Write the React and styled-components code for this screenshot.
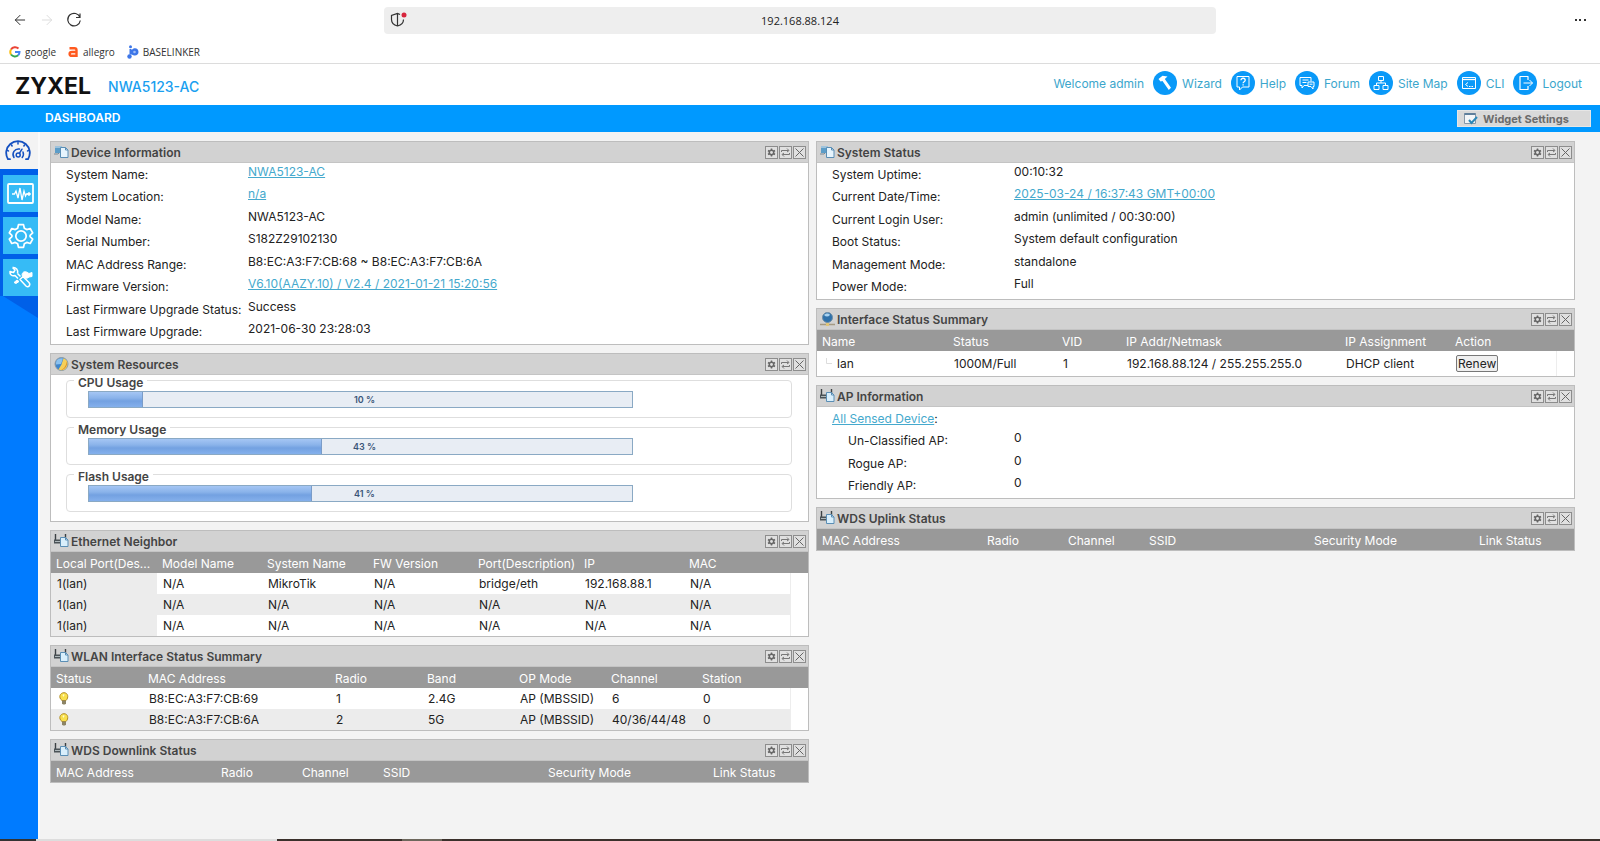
import React from "react";
import styled, { createGlobalStyle } from "styled-components";
import { ArrowLeft, ArrowRight } from "lucide-react";

const GlobalStyle = createGlobalStyle`
  * {
    box-sizing: border-box;
  }
  body {
    margin: 0;
    background: #f3f3f3;
    color: #222;
    font-family: Inter, "Liberation Sans", sans-serif;
    font-size: 12px;
  }
  button, input {
    font-family: inherit;
  }
  svg {
    display: block;
    flex: none;
  }
`;

const Page = styled.div`
  display: flex;
  flex-direction: column;
  min-height: 100vh;
`;

// Browser chrome
const Chrome = styled.div`
  background: #fff;
  border-bottom: 1px solid #dcdcdc;
  font-family: "Open Sans", "Noto Sans", sans-serif;
`;

const Toolbar = styled.div`
  display: grid;
  grid-template-columns: 24% 52% 24%;
  align-items: center;
  height: 40px;
`;

const NavButtons = styled.div`
  display: flex;
  gap: 11px;
  padding-left: 12px;
`;

const ChromeButton = styled.button`
  display: flex;
  padding: 0;
  border: 0;
  background: none;
  color: #333;
  justify-self: end;
  &:disabled {
    color: #ddd;
  }
`;

const MoreButton = styled(ChromeButton)`
  margin-right: 13px;
`;

const AddressBar = styled.label`
  display: flex;
  align-items: center;
  height: 27px;
  padding: 0 24px 0 6px;
  border-radius: 4px;
  background: #eee;
`;

const AddressInput = styled.input`
  flex: 1;
  min-width: 0;
  padding: 0;
  border: 0;
  background: none;
  color: #222;
  font-size: 11px;
  text-align: center;
`;

const Bookmarks = styled.nav`
  display: flex;
  gap: 12px;
  height: 23px;
  padding-left: 9px;
`;

const Bookmark = styled.a`
  display: flex;
  align-items: center;
  gap: 4px;
  color: #333;
  font-size: 10px;
  text-decoration: none;
`;

// Header
const Header = styled.header`
  display: flex;
  align-items: center;
  height: 41px;
  padding: 0 18px 0 15px;
  background: #fff;
`;

const Logo = styled.span`
  padding-top: 2px;
  color: #111;
  font-size: 23px;
  font-weight: 700;
`;

const Model = styled.span`
  flex: 1;
  padding: 4px 0 0 17px;
  color: #1a9ff0;
  font-size: 14px;
  font-weight: 500;
`;

const UserNav = styled.nav`
  display: flex;
  align-items: center;
  gap: 9px;
  height: 38px;
  align-self: flex-start;
  color: #3ba6cc;
`;

const NavLink = styled.a`
  display: flex;
  align-items: center;
  gap: 5px;
  color: inherit;
  text-decoration: none;
`;

const Round = styled.span`
  display: flex;
  align-items: center;
  justify-content: center;
  width: 24px;
  height: 24px;
  border-radius: 50%;
  background: #0a99f8;
`;

const TitleBar = styled.div`
  display: flex;
  align-items: flex-start;
  justify-content: space-between;
  height: 27px;
  padding: 5px 9px 0 45px;
  background: #09f;
`;

const PageTitle = styled.h1`
  margin: 0;
  color: #fff;
  font-size: 12px;
  font-weight: 600;
  line-height: 15px;
`;

const SettingsButton = styled.button`
  display: flex;
  align-items: center;
  gap: 5px;
  width: 134px;
  height: 17px;
  padding: 0 6px;
  border: 1px solid #e6e6e6;
  background: #d9d9d9;
  color: #6b6b6b;
  font-size: 11px;
  font-weight: 700;
`;

// Layout
const Content = styled.div`
  display: flex;
  flex: 1;
`;

const Sidebar = styled.nav`
  display: flex;
  flex: none;
  flex-direction: column;
  width: 40px;
  border-right: 2px solid #fafafa;
`;

const SideHome = styled.a`
  height: 37px;
  padding: 8px 0 0 5px;
`;

const SideMenu = styled.div`
  display: flex;
  flex: 1;
  flex-direction: column;
  gap: 5px;
  padding: 6px 0 0 3px;
  background: linear-gradient(#0060e8, #0060e8) top / 100% 127px no-repeat
    #007bff;
`;

const SideLink = styled.a`
  display: flex;
  align-items: center;
  justify-content: center;
  height: 37px;
  background: #36bbf6;
`;

const SideShadow = styled.svg`
  width: 38px;
  height: 22px;
  margin: -5px 0 0 -3px;
`;

const Main = styled.main`
  display: grid;
  flex: 1;
  grid-template-columns: 1fr 1fr;
  align-items: start;
  gap: 9px;
  padding: 9px 27px 9px 10px;
`;

const Column = styled.div`
  display: grid;
  gap: 8px;
  min-width: 0;
`;

const WidgetBox = styled.section`
  border: 1px solid #bdbdbd;
  background: #fff;
`;

const WidgetHeader = styled.header`
  display: flex;
  align-items: center;
  gap: 2px;
  height: 21px;
  padding: 0 2px 0 3px;
  border-bottom: 1px solid #c4c4c4;
  background: #d2d2d2;
`;

const WidgetTitle = styled.h2`
  flex: 1;
  margin: 0;
  color: #444;
  font-size: 12px;
  font-weight: 600;
`;

const Tools = styled.div`
  display: flex;
  gap: 1px;
`;

const ToolButton = styled.button`
  display: flex;
  width: 13px;
  height: 13px;
  padding: 0;
  border: 1px solid #8d8d8d;
  background: #e0e0e0;
  color: #666;
`;

const Fields = styled.dl`
  margin: 0;
  padding-bottom: 1px;
`;

const Field = styled.div`
  display: flex;
  height: 22px;
  &:nth-child(even) {
    height: 23px;
  }
`;

const FieldName = styled.dt`
  width: 182px;
  margin-left: 15px;
  padding-left: ${(p) => (p.$indent ? "16px" : "0")};
  line-height: 23px;
`;

const FieldValue = styled.dd`
  margin: 0;
  line-height: 17px;
`;

const TextLink = styled.a`
  color: #45a9cd;
`;

const Table = styled.table`
  width: 100%;
  table-layout: fixed;
  border-collapse: collapse;
  tbody tr:nth-child(even) {
    background: #ececec;
  }
`;

const Col = styled.col`
  width: ${(p) => p.$width}px;
`;

const Th = styled.th`
  height: 21px;
  padding: 1px 3px 0 5px;
  overflow: hidden;
  background: #999;
  color: #fff;
  font-weight: 400;
  text-align: left;
  text-overflow: ellipsis;
  white-space: nowrap;
`;

const Td = styled.td`
  height: ${(p) => (p.$tall ? "25px" : "21px")};
  padding: 0 0 0 6px;
  background: ${(p) => (p.$sorted ? "#ececec" : "transparent")};
  white-space: nowrap;
`;

const EndTd = styled.td`
  padding: 0;
  border-left: 1px solid #ededed;
  background: #fff;
`;

const Node = styled.span`
  display: flex;
  align-items: center;
  gap: 5px;
  padding-left: 3px;
`;

const RenewButton = styled.button`
  height: 17px;
  padding: 0 1px;
  border: 1px solid #777;
  border-radius: 2px;
  background: #efefef;
  color: #222;
  font-size: 12px;
  line-height: 14px;
`;

const Usages = styled.div`
  display: grid;
  gap: 4px;
  padding: 0 16px 9px 15px;
`;

const Usage = styled.fieldset`
  min-width: 0;
  margin: 0;
  padding: 6px 0 9px 7px;
  border: 1px solid #dedede;
  border-radius: 4px;
`;

const UsageName = styled.legend`
  height: 10px;
  padding: 0 4px;
  color: #444;
  font-weight: 600;
  line-height: 15px;
`;

const Bar = styled.div`
  display: grid;
  width: 76%;
  height: 17px;
  margin-left: 14px;
  border: 1px solid #8aa9c4;
  background: #e8edf4;
  & > * {
    grid-area: 1 / 1;
  }
`;

const BarFill = styled.div`
  border-right: 1px solid #7a9cc8;
  background: linear-gradient(#a5c6f4, #8ab3ea 40%, #73a1e1 60%, #84b0ec);
`;

const BarText = styled.span`
  padding-left: 8px;
  color: #3b5578;
  font-size: 9px;
  font-weight: 600;
  line-height: 15px;
  text-align: center;
`;

const TaskStrip = styled.footer`
  display: grid;
  grid-template-columns: 36px 241px 125px 40px 1fr;
  height: 2px;
`;

const Strip = styled.span`
  background: ${(p) => p.$color};
`;

// Icons
const Line = ({ size = 16, children, ...rest }) => (
  <svg
    width={size}
    height={size}
    viewBox="0 0 16 16"
    fill="none"
    stroke="#fff"
    strokeWidth="1"
    strokeLinejoin="round"
    {...rest}
  >
    {children}
  </svg>
);

const headerIcons = {
  wizard: (
    <Line>
      <path
        d="M1.500 4 5.500.8 10.500 1.500 7.800 4 14 12.800 11.800 15 5.500 6 3.500 6.500Z"
        fill="#fff"
        stroke="none"
      />
    </Line>
  ),
  help: (
    <Line>
      <path d="M2 1.500h12v10.500H7.500L4.500 15v-3H2Z" />
      <path d="M6 5.200c0-2.700 4.200-2.500 4.200 0 0 1.500-2.100 1.500-2.100 3" strokeWidth="1.300" />
      <path d="M8.100 9.200v1.300" strokeWidth="1.300" />
    </Line>
  ),
  forum: (
    <Line>
      <path d="M9 10.500H5L3 13v-2.500H1v-8h11v4" />
      <path d="M3.500 5h6M3.500 7.500h4" />
      <path d="M9 7h6v4.500h-1V14l-2-2.500H9Z" />
      <path d="M10.500 9.200h3" />
    </Line>
  ),
  map: (
    <Line>
      <path d="M5.500 1.500h5v4h-5ZM1 10.500h5v4H1ZM10 10.500h5v4h-5Z" />
      <path d="M8 5.500V8M3.500 10.500V8h9v2.500" />
    </Line>
  ),
  cli: (
    <Line>
      <path d="M1.500 2.500h13v11h-13Z" />
      <path d="M1.500 4.500h13" strokeWidth="1.300" />
      <path d="m7 7.500-2.500 2L7 11.500M8 11.500h1.500M10.500 11.500H12" />
    </Line>
  ),
  logout: (
    <Line>
      <path d="M11 5V1.500H3v13h8V11" strokeWidth="1.200" />
      <path d="M6.500 8h9M12.500 5l3 3-3 3" />
    </Line>
  ),
};

const DocIcon = () => (
  <svg width="15" height="14" viewBox="0 0 15 14">
    <path d="M1 1h7v7H1Z" fill="#5c9dc8" />
    <path d="M1 1h7v2H1Z" fill="#9fc3dc" />
    <path d="M0 9h4l1-1" fill="none" stroke="#7b8994" />
    <path d="M6.500 2.500h5L14 5v7.500H6.500Z" fill="#e6f4fd" stroke="#5a8eb5" />
    <path d="M11.500 2.500V5H14" fill="none" stroke="#5a8eb5" />
  </svg>
);

const ApIcon = () => (
  <svg width="15" height="14" viewBox="0 0 15 14">
    <path d="M1.500 0v6M11.500 0v4" stroke="#3c4144" strokeWidth="1.400" />
    <path d="M0 5.500h8V9.500H0Z" fill="#4b5357" />
    <path d="M1 7.500h5" stroke="#aeb7ba" />
    <path d="M6.500 3.500h5L14 6v6.500H6.500Z" fill="#d9effc" stroke="#5a8eb5" />
    <path d="M11.500 3.500V6H14" fill="none" stroke="#5a8eb5" />
  </svg>
);

const PieIcon = () => (
  <svg width="15" height="14" viewBox="0 0 15 14">
    <circle cx="7.500" cy="7" r="6.500" fill="#3f86cc" stroke="#8b9aa5" />
    <path d="M3 3a6 6 0 0 1 6-1.500L7 7 2 7.500A6 6 0 0 1 3 3Z" fill="#8cc2ee" />
    <path d="M9.500 1.200A6.200 6.200 0 0 1 7 13.200L4.500 12.500 7.500 7.500Z" fill="#f6cf58" />
    <path d="M12.500 4c1.500 4-1 8.500-5.500 9.200C11 11 12.500 8 12.500 4Z" fill="#d98a25" />
  </svg>
);

const GlobeIcon = () => (
  <svg width="15" height="14" viewBox="0 0 15 14">
    <circle cx="7.500" cy="5.500" r="5" fill="#2f71aa" stroke="#6f8ea6" />
    <path d="M4 3c2-2 5-2 6 0-2 2-4 2-6 0Z" fill="#a9d2f0" />
    <path d="M0 12.500h15" stroke="#a59a83" strokeWidth="1.500" />
    <path d="M6 11h3v3H6Z" fill="#dfc579" />
  </svg>
);

const BulbIcon = () => (
  <svg width="13" height="13" viewBox="-1 0 12 13" role="img" aria-label="On">
    <path
      d="M3.500 8.500C-.5 5.500 1.500.7 5.500.7S10.500 5.500 7.500 8.500Z"
      fill="#f9e04c"
      stroke="#b28d22"
    />
    <path d="M4 3c1-1 2-1 2 0L5 5Z" fill="#fffbd0" />
    <path d="M3.500 8.500h4v3l-1 1h-2l-1-1Z" fill="#8c8466" />
  </svg>
);

const GaugeIcon = () => (
  <svg
    width="26"
    height="22"
    viewBox="0 0 26 22"
    fill="none"
    stroke="#1450c0"
    strokeWidth="1.500"
    strokeLinecap="round"
  >
    <path d="M5 19.200H3A11.800 11.800 0 1 1 23 19.200h-2" strokeWidth="1.800" />
    <path d="M13 2.500v1.500M6.500 5l.6 1M2.500 10.500l1 .4M19.500 5l-.6 1M23.500 10.500l-1 .4" />
    <path d="M9 17.500A5.500 5.500 0 0 1 14.500 9M18 12a5.500 5.500 0 0 1-.8 5.500" />
    <circle cx="13.200" cy="15" r="2" />
    <path d="m14.500 13.200 2.500-4" />
  </svg>
);

const MonitorIcon = () => (
  <svg width="28" height="22" viewBox="0 0 28 22" fill="none" stroke="#fff">
    <rect x="1" y="1" width="25" height="19" rx="1" strokeWidth="1.800" />
    <path
      d="M5 11h2.500l1.500-3 2 7L13 5l2 12 2-9 1.500 5 1-2h2"
      strokeWidth="1.300"
    />
    <circle cx="22" cy="11" r="1.300" fill="#fff" />
  </svg>
);

const CogIcon = () => (
  <svg
    width="26"
    height="26"
    viewBox="0 0 24 24"
    fill="none"
    stroke="#fff"
    strokeWidth="1.600"
    strokeLinejoin="round"
  >
    <path d="M9.700 1.500h4.600l.8 3.300 2.200 1.300 3.200-1 2.300 4-2.400 2.300v1.200l2.400 2.300-2.300 4-3.200-1-2.200 1.300-.8 3.300H9.700l-.8-3.300-2.200-1.300-3.200 1-2.300-4 2.400-2.300v-1.200L1.200 9.100l2.300-4 3.200 1 2.200-1.300Z" />
    <circle cx="12" cy="12" r="4.800" />
  </svg>
);

const WrenchIcon = () => (
  <svg
    width="26"
    height="23"
    viewBox="0 0 26 23"
    fill="none"
    stroke="#fff"
    strokeWidth="1.500"
    strokeLinejoin="round"
  >
    <path d="M4.500 1.500 7 4 5.500 6.500 2 5.500C1.500 8.500 4 10.500 7 9.500l3 3M9.500 7.500C10.500 4 8 1 4.500 1.500M9.500 7.500l3 3" />
    <path d="m12 13.500 3-3 6 6c2 2.500-.5 5.500-3 3.500Z" />
    <path
      d="M14 9.500c0-3 2-4.500 4.500-3.500L21 7.500l3-1v4l-3 .5c-1.500 1.500-3 1.500-4.500.5Z"
      fill="#fff"
      strokeWidth="1"
    />
    <path d="m9 14-3 2.500 2 1 3-2Z" fill="#fff" strokeWidth="1" />
  </svg>
);

const GearTool = () => (
  <svg width="11" height="11" viewBox="0 0 11 11" fill="none" stroke="#666">
    <circle cx="5.500" cy="5.500" r="2.200" strokeWidth="1.500" />
    <path
      d="M5.500 1.500v1.500M5.500 8v1.500M2 3.500l1.300.8M7.700 6.700l1.300.8M9 3.500l-1.300.8M3.300 6.700 2 7.500"
      strokeWidth="1.500"
    />
  </svg>
);

const RefreshTool = () => (
  <svg width="11" height="11" viewBox="0 0 11 11" fill="none" stroke="#777">
    <path d="M1.500 5V3.500h7M7 1.500l2 2-2 1.500M9.500 6v1.500h-7M4 6 2 7.500l2 2" />
  </svg>
);

const CloseTool = () => (
  <svg width="11" height="11" viewBox="0 0 11 11" fill="none" stroke="#666">
    <path d="m1.500 1.500 8 8M9.500 1.500l-8 8" />
  </svg>
);

const links = [
  ["Wizard", "wizard"],
  ["Help", "help"],
  ["Forum", "forum"],
  ["Site Map", "map"],
  ["CLI", "cli"],
  ["Logout", "logout"],
];

const deviceInfo = [
  ["System Name:", "NWA5123-AC", true],
  ["System Location:", "n/a", true],
  ["Model Name:", "NWA5123-AC"],
  ["Serial Number:", "S182Z29102130"],
  ["MAC Address Range:", "B8:EC:A3:F7:CB:68 ~ B8:EC:A3:F7:CB:6A"],
  ["Firmware Version:", "V6.10(AAZY.10) / V2.4 / 2021-01-21 15:20:56", true],
  ["Last Firmware Upgrade Status:", "Success"],
  ["Last Firmware Upgrade:", "2021-06-30 23:28:03"],
];

const systemStatus = [
  ["System Uptime:", "00:10:32"],
  ["Current Date/Time:", "2025-03-24 / 16:37:43 GMT+00:00", true],
  ["Current Login User:", "admin (unlimited / 00:30:00)"],
  ["Boot Status:", "System default configuration"],
  ["Management Mode:", "standalone"],
  ["Power Mode:", "Full"],
];

const usage = [
  ["CPU Usage", 10],
  ["Memory Usage", 43],
  ["Flash Usage", 41],
];

const neighborCols = [
  ["Local Port(Des...", 106],
  ["Model Name", 105],
  ["System Name", 106],
  ["FW Version", 105],
  ["Port(Description)", 106],
  ["IP", 105],
  ["MAC", 106],
];

const neighbors = [
  ["1(lan)", "N/A", "MikroTik", "N/A", "bridge/eth", "192.168.88.1", "N/A"],
  ["1(lan)", "N/A", "N/A", "N/A", "N/A", "N/A", "N/A"],
  ["1(lan)", "N/A", "N/A", "N/A", "N/A", "N/A", "N/A"],
];

const wlanCols = [
  ["Status", 92],
  ["MAC Address", 187],
  ["Radio", 92],
  ["Band", 92],
  ["OP Mode", 92],
  ["Channel", 91],
  ["Station", 93],
];

const wlans = [
  [<BulbIcon />, "B8:EC:A3:F7:CB:69", "1", "2.4G", "AP (MBSSID)", "6", "0"],
  [
    <BulbIcon />,
    "B8:EC:A3:F7:CB:6A",
    "2",
    "5G",
    "AP (MBSSID)",
    "40/36/44/48",
    "0",
  ],
];

const interfaceCols = [
  ["Name", 131],
  ["Status", 109],
  ["VID", 64],
  ["IP Addr/Netmask", 219],
  ["IP Assignment", 110],
  ["Action", 106],
];

const interfaces = [
  [
    <Node>
      <svg width="6" height="12" fill="none" stroke="#ddd">
        <path d="M.5 0v5.500H6" />
      </svg>
      lan
    </Node>,
    "1000M/Full",
    "1",
    "192.168.88.124 / 255.255.255.0",
    "DHCP client",
    <RenewButton type="button">Renew</RenewButton>,
  ],
];

const wdsCols = [
  ["MAC Address", 165],
  ["Radio", 81],
  ["Channel", 81],
  ["SSID", 165],
  ["Security Mode", 165],
  ["Link Status", 82],
];

const Widget = ({ title, icon, children }) => (
  <WidgetBox>
    <WidgetHeader>
      {icon}
      <WidgetTitle>{title}</WidgetTitle>
      <Tools>
        <ToolButton type="button" aria-label="Settings">
          <GearTool />
        </ToolButton>
        <ToolButton type="button" aria-label="Refresh">
          <RefreshTool />
        </ToolButton>
        <ToolButton type="button" aria-label="Close">
          <CloseTool />
        </ToolButton>
      </Tools>
    </WidgetHeader>
    {children}
  </WidgetBox>
);

const FieldList = ({ rows }) => (
  <Fields>
    {rows.map(([name, value, link]) => (
      <Field key={name}>
        <FieldName>{name}</FieldName>
        <FieldValue>
          {link ? <TextLink href="#">{value}</TextLink> : value}
        </FieldValue>
      </Field>
    ))}
  </Fields>
);

const DataTable = ({ cols, rows = [], sorted, tall }) => (
  <Table>
    <colgroup>
      {cols.map(([name, width]) => (
        <Col key={name} $width={width} />
      ))}
      <Col $width={18} />
    </colgroup>
    <thead>
      <tr>
        {cols.map(([name]) => (
          <Th key={name}>{name}</Th>
        ))}
        <Th />
      </tr>
    </thead>
    <tbody>
      {rows.map((row, i) => (
        <tr key={i}>
          {row.map((cell, j) => (
            <Td key={j} $tall={tall} $sorted={sorted && j === 0}>
              {cell}
            </Td>
          ))}
          <EndTd />
        </tr>
      ))}
    </tbody>
  </Table>
);

const App = () => (
  <>
    <GlobalStyle />
    <Page>
      <Chrome>
        <Toolbar>
          <NavButtons>
            <ChromeButton type="button" aria-label="Back">
              <ArrowLeft size={16} strokeWidth={1.5} />
            </ChromeButton>
            <ChromeButton type="button" aria-label="Forward" disabled>
              <ArrowRight size={16} strokeWidth={1.5} />
            </ChromeButton>
            <ChromeButton type="button" aria-label="Reload">
              <svg width="16" height="16" fill="none" stroke="#333" strokeWidth="1.200">
                <path d="M14 5.500A6.300 6.300 0 1 0 14.300 8.500M14 1.500v4h-4" />
              </svg>
            </ChromeButton>
          </NavButtons>
          <AddressBar>
            <svg width="18" height="16" fill="none" stroke="#333" strokeWidth="1.200">
              <path d="M10 2.500 7.500 1.500l-6 2v4c0 3 2.500 5.500 6 6.500 4-1 6-4 6-6.500M7.500 1.500V14" />
              <circle cx="14" cy="3" r="2.500" fill="#d7263d" stroke="none" />
            </svg>
            <AddressInput aria-label="Address" defaultValue="192.168.88.124" />
          </AddressBar>
          <MoreButton type="button" aria-label="More">
            <svg width="13" height="4" fill="#333">
              <path d="M1 1h2v2H1ZM5 1h2v2H5ZM10 1h2v2h-2Z" />
            </svg>
          </MoreButton>
        </Toolbar>
        <Bookmarks>
          <Bookmark href="#">
            <svg width="12" height="12" viewBox="0 0 12 12" fill="none" strokeWidth="2">
              <path d="M9.500 2.500A5 5 0 0 0 2 3.500" stroke="#ea4335" />
              <path d="M2 3.500a5 5 0 0 0 0 5" stroke="#fbbc05" />
              <path d="M2 8.500a5 5 0 0 0 7.200.8" stroke="#34a853" />
              <path d="M9.200 9.300A5 5 0 0 0 10.500 6H6" stroke="#4285f4" />
            </svg>
            google
          </Bookmark>
          <Bookmark href="#">
            <svg width="11" height="12" viewBox="0 0 11 12" fill="none" stroke="#ff5a1f" strokeWidth="2.400">
              <path d="M1.500 2.200h5c1.500 0 2 .8 2 2V11M8.500 6H4C.8 6 .8 9.800 4 9.800h4.500" />
            </svg>
            allegro
          </Bookmark>
          <Bookmark href="#">
            <svg width="12" height="14" viewBox="0 0 12 14" fill="#3d76e8">
              <circle cx="3.500" cy="1.800" r="1.500" />
              <path d="M2.500 4h2v1l2-1.500c3-1 5 1 5 3.500s-2 4-4.500 3.500L4.500 9.500h-2Z" />
              <circle cx="2.500" cy="11.500" r="2.200" />
              <circle cx="7.500" cy="7" r="1.300" fill="#9fbcf5" />
            </svg>
            BASELINKER
          </Bookmark>
        </Bookmarks>
      </Chrome>

      <Header>
        <Logo>ZYXEL</Logo>
        <Model>NWA5123-AC</Model>
        <UserNav>
          <span>Welcome admin</span>
          {links.map(([name, icon]) => (
            <NavLink key={name} href="#">
              <Round>{headerIcons[icon]}</Round>
              {name}
            </NavLink>
          ))}
        </UserNav>
      </Header>

      <TitleBar>
        <PageTitle>DASHBOARD</PageTitle>
        <SettingsButton type="button">
          <svg width="14" height="13" viewBox="0 0 14 13" fill="none">
            <path d="M.5 1.500h11v10H.5Z" fill="#f4f6f8" stroke="#8798a8" />
            <path d="M.5 2h11" stroke="#5f7f9c" strokeWidth="2" />
            <path d="m5 8 2.500 3L13 5" stroke="#2c88b8" strokeWidth="2" />
          </svg>
          Widget Settings
        </SettingsButton>
      </TitleBar>

      <Content>
        <Sidebar>
          <SideHome href="#" aria-label="Dashboard">
            <GaugeIcon />
          </SideHome>
          <SideMenu>
            <SideLink href="#" aria-label="Monitor">
              <MonitorIcon />
            </SideLink>
            <SideLink href="#" aria-label="Configuration">
              <CogIcon />
            </SideLink>
            <SideLink href="#" aria-label="Maintenance">
              <WrenchIcon />
            </SideLink>
            <SideShadow viewBox="0 0 38 22">
              <path d="M3 0h35v22Z" fill="#0060e8" />
            </SideShadow>
          </SideMenu>
        </Sidebar>

        <Main>
          <Column>
            <Widget title="Device Information" icon={<DocIcon />}>
              <FieldList rows={deviceInfo} />
            </Widget>
            <Widget title="System Resources" icon={<PieIcon />}>
              <Usages>
                {usage.map(([name, value]) => (
                  <Usage key={name}>
                    <UsageName>{name}</UsageName>
                    <Bar
                      role="progressbar"
                      aria-label={name}
                      aria-valuenow={value}
                    >
                      <BarFill style={{ width: `${value}%` }} />
                      <BarText>{value} %</BarText>
                    </Bar>
                  </Usage>
                ))}
              </Usages>
            </Widget>
            <Widget title="Ethernet Neighbor" icon={<ApIcon />}>
              <DataTable cols={neighborCols} rows={neighbors} sorted />
            </Widget>
            <Widget title="WLAN Interface Status Summary" icon={<ApIcon />}>
              <DataTable cols={wlanCols} rows={wlans} />
            </Widget>
            <Widget title="WDS Downlink Status" icon={<ApIcon />}>
              <DataTable cols={wdsCols} />
            </Widget>
          </Column>

          <Column>
            <Widget title="System Status" icon={<DocIcon />}>
              <FieldList rows={systemStatus} />
            </Widget>
            <Widget title="Interface Status Summary" icon={<GlobeIcon />}>
              <DataTable cols={interfaceCols} rows={interfaces} tall />
            </Widget>
            <Widget title="AP Information" icon={<ApIcon />}>
              <Fields>
                <Field>
                  <FieldName>
                    <TextLink href="#">All Sensed Device</TextLink>:
                  </FieldName>
                </Field>
                {["Un-Classified AP:", "Rogue AP:", "Friendly AP:"].map(
                  (name) => (
                    <Field key={name}>
                      <FieldName $indent>{name}</FieldName>
                      <FieldValue>0</FieldValue>
                    </Field>
                  )
                )}
              </Fields>
            </Widget>
            <Widget title="WDS Uplink Status" icon={<ApIcon />}>
              <DataTable cols={wdsCols} />
            </Widget>
          </Column>
        </Main>
      </Content>

      <TaskStrip>
        <Strip $color="#333" />
        <Strip $color="#ddd" />
        <Strip $color="#3a302b" />
        <Strip $color="#6d675c" />
        <Strip $color="#3a302b" />
      </TaskStrip>
    </Page>
  </>
);

export default App;
